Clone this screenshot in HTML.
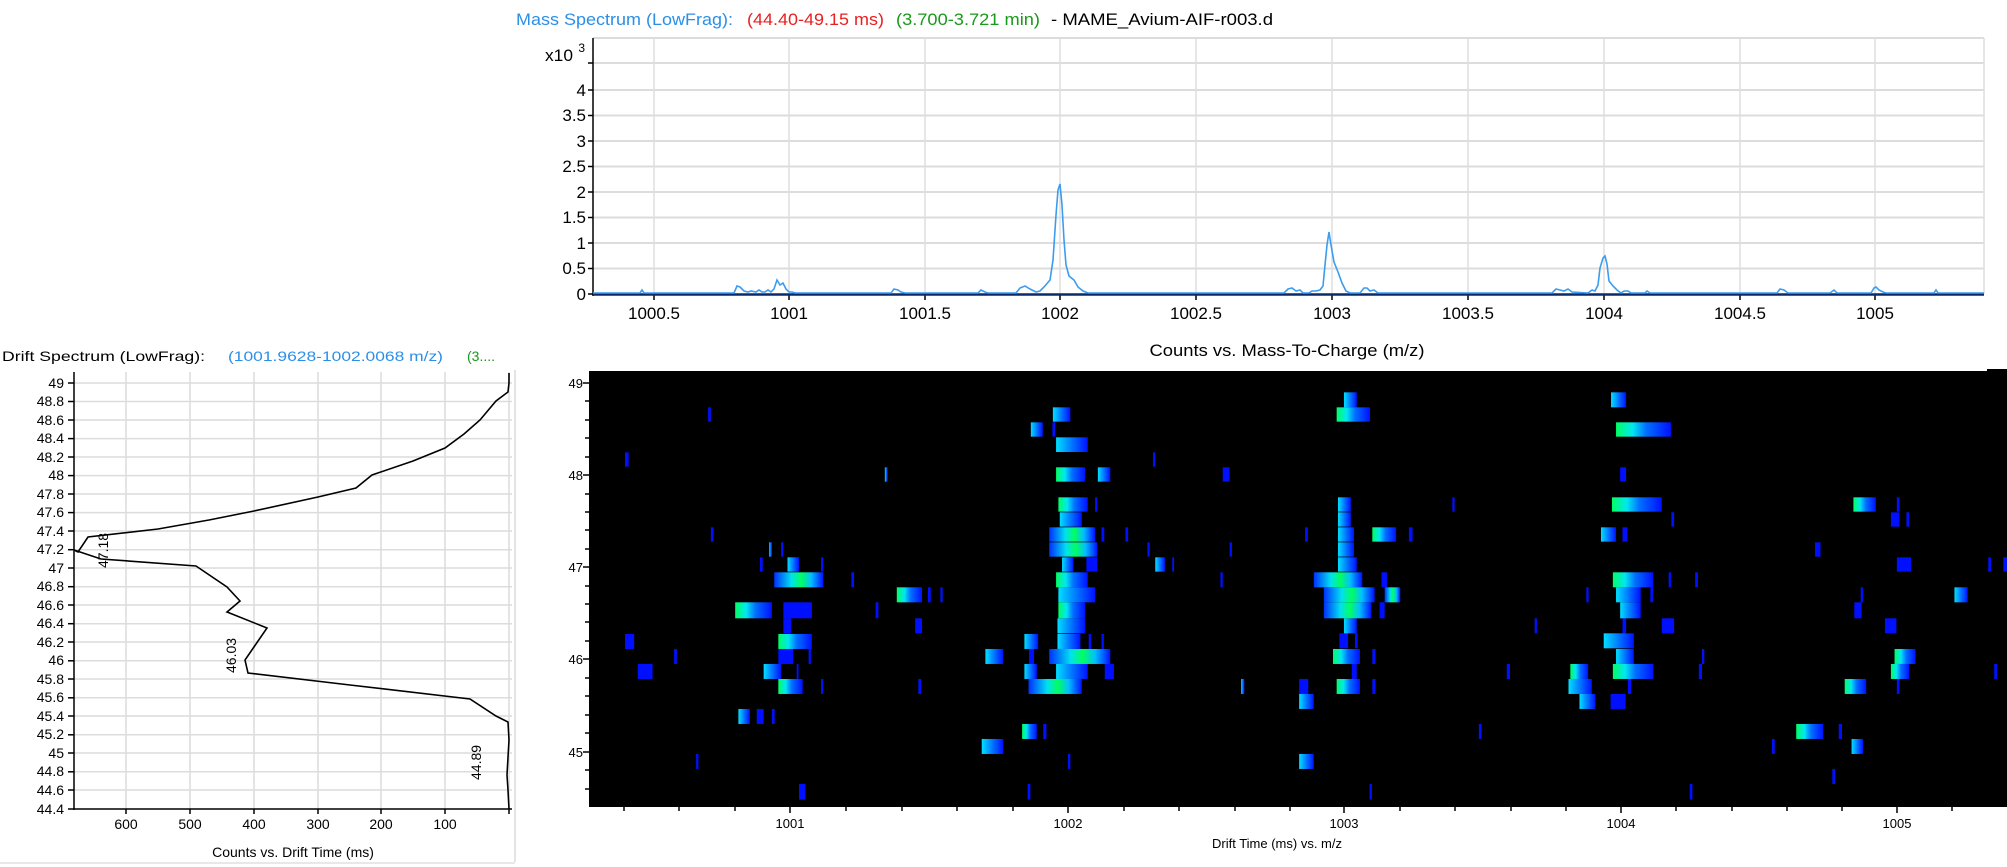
<!DOCTYPE html>
<html><head><meta charset="utf-8"><style>
html,body{margin:0;padding:0;background:#fff;width:2007px;height:867px;overflow:hidden}
svg{display:block}
text{font-family:"Liberation Sans",sans-serif}
</style></head><body>
<svg width="2007" height="867" viewBox="0 0 2007 867" xmlns="http://www.w3.org/2000/svg">
<defs>
<linearGradient id="g1" x1="0" x2="1" y1="0" y2="0"><stop offset="0" stop-color="#00ff60"/><stop offset="0.3" stop-color="#00e8f0"/><stop offset="0.55" stop-color="#0070ff"/><stop offset="1" stop-color="#0010ff"/></linearGradient>
<linearGradient id="g2" x1="0" x2="1" y1="0" y2="0"><stop offset="0" stop-color="#00e0ff"/><stop offset="0.45" stop-color="#0080ff"/><stop offset="1" stop-color="#0010ff"/></linearGradient>
<linearGradient id="g3" x1="0" x2="1" y1="0" y2="0"><stop offset="0" stop-color="#0030ff"/><stop offset="0.35" stop-color="#00e0f0"/><stop offset="0.55" stop-color="#00ff60"/><stop offset="0.75" stop-color="#00c0ff"/><stop offset="1" stop-color="#0010ff"/></linearGradient>
</defs>

<text x="516" y="25" font-size="17" fill="#2b8fe8" textLength="217" lengthAdjust="spacingAndGlyphs">Mass Spectrum (LowFrag):</text>
<text x="747" y="25" font-size="17" fill="#e82020" textLength="137" lengthAdjust="spacingAndGlyphs">(44.40-49.15 ms)</text>
<text x="896" y="25" font-size="17" fill="#1a9a1a" textLength="144" lengthAdjust="spacingAndGlyphs">(3.700-3.721 min)</text>
<text x="1051" y="25" font-size="17" fill="#000" textLength="222" lengthAdjust="spacingAndGlyphs">- MAME_Avium-AIF-r003.d</text>

<g stroke="#dcdcdc" stroke-width="2">
<line x1="593" y1="38" x2="1984" y2="38"/>
<line x1="593" y1="63" x2="1984" y2="63"/>
<line x1="593" y1="90" x2="1984" y2="90"/>
<line x1="593" y1="115.5" x2="1984" y2="115.5"/>
<line x1="593" y1="141" x2="1984" y2="141"/>
<line x1="593" y1="166.5" x2="1984" y2="166.5"/>
<line x1="593" y1="192" x2="1984" y2="192"/>
<line x1="593" y1="217.5" x2="1984" y2="217.5"/>
<line x1="593" y1="243" x2="1984" y2="243"/>
<line x1="593" y1="268.5" x2="1984" y2="268.5"/>
</g>
<g stroke="#dedede" stroke-width="1.5">
<line x1="654" y1="38" x2="654" y2="294"/><line x1="789" y1="38" x2="789" y2="294"/>
<line x1="925" y1="38" x2="925" y2="294"/><line x1="1060" y1="38" x2="1060" y2="294"/>
<line x1="1196" y1="38" x2="1196" y2="294"/><line x1="1332" y1="38" x2="1332" y2="294"/>
<line x1="1468" y1="38" x2="1468" y2="294"/><line x1="1604" y1="38" x2="1604" y2="294"/>
<line x1="1740" y1="38" x2="1740" y2="294"/><line x1="1875" y1="38" x2="1875" y2="294"/>
<line x1="1984" y1="38" x2="1984" y2="294"/>
</g>
<line x1="593" y1="38" x2="593" y2="296" stroke="#000" stroke-width="1.5"/>
<g stroke="#000" stroke-width="1.5">
<line x1="588" y1="63" x2="593" y2="63"/><line x1="588" y1="90" x2="593" y2="90"/><line x1="588" y1="115.5" x2="593" y2="115.5"/><line x1="588" y1="141" x2="593" y2="141"/><line x1="588" y1="166.5" x2="593" y2="166.5"/><line x1="588" y1="192" x2="593" y2="192"/><line x1="588" y1="217.5" x2="593" y2="217.5"/><line x1="588" y1="243" x2="593" y2="243"/><line x1="588" y1="268.5" x2="593" y2="268.5"/><line x1="588" y1="294" x2="593" y2="294"/>
<line x1="654" y1="294" x2="654" y2="300"/><line x1="789" y1="294" x2="789" y2="300"/><line x1="925" y1="294" x2="925" y2="300"/><line x1="1060" y1="294" x2="1060" y2="300"/><line x1="1196" y1="294" x2="1196" y2="300"/><line x1="1332" y1="294" x2="1332" y2="300"/><line x1="1468" y1="294" x2="1468" y2="300"/><line x1="1604" y1="294" x2="1604" y2="300"/><line x1="1740" y1="294" x2="1740" y2="300"/><line x1="1875" y1="294" x2="1875" y2="300"/>
</g>
<g font-size="17" fill="#000" text-anchor="end">
<text x="573" y="61" textLength="28" lengthAdjust="spacingAndGlyphs">x10</text>
<text x="585" y="52" font-size="12">3</text>
<text x="586" y="96">4</text><text x="586" y="121">3.5</text><text x="586" y="147">3</text><text x="586" y="172">2.5</text><text x="586" y="198">2</text><text x="586" y="223">1.5</text><text x="586" y="249">1</text><text x="586" y="274">0.5</text><text x="586" y="300">0</text>
</g>
<g font-size="17" fill="#000" text-anchor="middle">
<text x="654" y="319">1000.5</text><text x="789" y="319">1001</text><text x="925" y="319">1001.5</text><text x="1060" y="319">1002</text><text x="1196" y="319">1002.5</text><text x="1332" y="319">1003</text><text x="1468" y="319">1003.5</text><text x="1604" y="319">1004</text><text x="1740" y="319">1004.5</text><text x="1875" y="319">1005</text>
<text x="1287" y="356" textLength="275" lengthAdjust="spacingAndGlyphs">Counts vs. Mass-To-Charge (m/z)</text>
</g>
<line x1="593" y1="294.5" x2="1984" y2="294.5" stroke="#0a2a6a" stroke-width="2.5"/>
<polyline fill="none" stroke="#3b9cf0" stroke-width="1.6" points="593,293 640,293 642,290 644,293 734,293 737,286 740,287 744,291 748,292 751,291 756,292 759,290 762,292 765,292 768,290 771,292 774,289 777,280 780,285 783,283 786,289 789,292 792,292 795,293 891,293 894,289 898,290 901,292 905,293 978,293 981,290 985,292 988,293 1016,293 1020,288 1025,286 1030,289 1036,292 1040,291 1044,287 1050,280 1053,260 1056,215 1058,190 1060,184 1062,205 1064,240 1066,265 1069,276 1074,280 1078,287 1083,291 1088,293 1284,293 1288,289 1292,288 1296,291 1300,290 1303,293 1309,293 1312,291 1316,291 1320,290 1323,286 1325,265 1327,245 1329,232 1331,245 1334,262 1338,272 1342,283 1346,291 1350,293 1360,293 1364,288 1367,288 1370,291 1374,290 1378,293 1552,293 1556,289 1560,290 1564,291 1568,289 1572,292 1588,293 1592,290 1595,291 1598,285 1600,268 1603,258 1605,256 1607,264 1609,281 1613,286 1617,290 1621,293 1624,291 1628,291 1631,293 1645,293 1647,291 1650,293 1777,293 1780,289 1784,290 1788,293 1830,293 1834,290 1837,293 1871,293 1874,288 1876,287 1879,290 1883,292 1886,293 1934,293 1936,290 1938,293 1984,293"/>

<text x="2" y="361" font-size="14" fill="#000" textLength="203" lengthAdjust="spacingAndGlyphs">Drift Spectrum (LowFrag):</text>
<text x="228" y="361" font-size="14" fill="#2b8fe8" textLength="215" lengthAdjust="spacingAndGlyphs">(1001.9628-1002.0068  m/z)</text>
<text x="467" y="361" font-size="14" fill="#1a9a1a">(3....</text>
<line x1="515" y1="370" x2="515" y2="862" stroke="#e4e4e4" stroke-width="2"/>
<line x1="0" y1="863" x2="515" y2="863" stroke="#e8e8e8" stroke-width="2"/>
<g stroke="#dcdcdc" stroke-width="1.5">
<line x1="74" y1="383" x2="512" y2="383"/><line x1="74" y1="401.5" x2="512" y2="401.5"/><line x1="74" y1="420" x2="512" y2="420"/><line x1="74" y1="438.6" x2="512" y2="438.6"/><line x1="74" y1="457" x2="512" y2="457"/><line x1="74" y1="475.6" x2="512" y2="475.6"/><line x1="74" y1="494" x2="512" y2="494"/><line x1="74" y1="512.6" x2="512" y2="512.6"/><line x1="74" y1="531" x2="512" y2="531"/><line x1="74" y1="549.7" x2="512" y2="549.7"/><line x1="74" y1="568" x2="512" y2="568"/><line x1="74" y1="586.7" x2="512" y2="586.7"/><line x1="74" y1="605" x2="512" y2="605"/><line x1="74" y1="623.7" x2="512" y2="623.7"/><line x1="74" y1="642" x2="512" y2="642"/><line x1="74" y1="660.8" x2="512" y2="660.8"/><line x1="74" y1="679" x2="512" y2="679"/><line x1="74" y1="697.8" x2="512" y2="697.8"/><line x1="74" y1="716" x2="512" y2="716"/><line x1="74" y1="734.8" x2="512" y2="734.8"/><line x1="74" y1="753" x2="512" y2="753"/><line x1="74" y1="771.8" x2="512" y2="771.8"/><line x1="74" y1="790" x2="512" y2="790"/>
<line x1="126" y1="372" x2="126" y2="809"/><line x1="190" y1="372" x2="190" y2="809"/><line x1="254" y1="372" x2="254" y2="809"/><line x1="318" y1="372" x2="318" y2="809"/><line x1="381" y1="372" x2="381" y2="809"/><line x1="445" y1="372" x2="445" y2="809"/><line x1="509" y1="372" x2="509" y2="809"/>
</g>
<line x1="74" y1="372" x2="74" y2="810" stroke="#000" stroke-width="1.5"/>
<line x1="74" y1="809" x2="512" y2="809" stroke="#000" stroke-width="1.5"/>
<g stroke="#000" stroke-width="1.5">
<line x1="68" y1="383" x2="74" y2="383"/><line x1="68" y1="401.5" x2="74" y2="401.5"/><line x1="68" y1="420" x2="74" y2="420"/><line x1="68" y1="438.6" x2="74" y2="438.6"/><line x1="68" y1="457" x2="74" y2="457"/><line x1="68" y1="475.6" x2="74" y2="475.6"/><line x1="68" y1="494" x2="74" y2="494"/><line x1="68" y1="512.6" x2="74" y2="512.6"/><line x1="68" y1="531" x2="74" y2="531"/><line x1="68" y1="549.7" x2="74" y2="549.7"/><line x1="68" y1="568" x2="74" y2="568"/><line x1="68" y1="586.7" x2="74" y2="586.7"/><line x1="68" y1="605" x2="74" y2="605"/><line x1="68" y1="623.7" x2="74" y2="623.7"/><line x1="68" y1="642" x2="74" y2="642"/><line x1="68" y1="660.8" x2="74" y2="660.8"/><line x1="68" y1="679" x2="74" y2="679"/><line x1="68" y1="697.8" x2="74" y2="697.8"/><line x1="68" y1="716" x2="74" y2="716"/><line x1="68" y1="734.8" x2="74" y2="734.8"/><line x1="68" y1="753" x2="74" y2="753"/><line x1="68" y1="771.8" x2="74" y2="771.8"/><line x1="68" y1="790" x2="74" y2="790"/><line x1="68" y1="809" x2="74" y2="809"/>
<line x1="126" y1="809" x2="126" y2="814"/><line x1="190" y1="809" x2="190" y2="814"/><line x1="254" y1="809" x2="254" y2="814"/><line x1="318" y1="809" x2="318" y2="814"/><line x1="381" y1="809" x2="381" y2="814"/><line x1="445" y1="809" x2="445" y2="814"/><line x1="509" y1="809" x2="509" y2="814"/>
</g>
<g font-size="14" fill="#000" text-anchor="end">
<text x="64" y="388">49</text><text x="64" y="406">48.8</text><text x="64" y="425">48.6</text><text x="64" y="443">48.4</text><text x="64" y="462">48.2</text><text x="64" y="480">48</text><text x="64" y="499">47.8</text><text x="64" y="517">47.6</text><text x="64" y="536">47.4</text><text x="64" y="554">47.2</text><text x="64" y="573">47</text><text x="64" y="591">46.8</text><text x="64" y="610">46.6</text><text x="64" y="628">46.4</text><text x="64" y="647">46.2</text><text x="64" y="665">46</text><text x="64" y="684">45.8</text><text x="64" y="702">45.6</text><text x="64" y="721">45.4</text><text x="64" y="739">45.2</text><text x="64" y="758">45</text><text x="64" y="776">44.8</text><text x="64" y="795">44.6</text><text x="64" y="814">44.4</text>
</g>
<g font-size="14" fill="#000" text-anchor="middle">
<text x="126" y="829">600</text><text x="190" y="829">500</text><text x="254" y="829">400</text><text x="318" y="829">300</text><text x="381" y="829">200</text><text x="445" y="829">100</text>
<text x="293" y="857">Counts vs. Drift Time (ms)</text>
</g>
<polyline fill="none" stroke="#000" stroke-width="1.6" points="509,373 509,383 508,392 496,401 480,420 464,434 445,448 413,461 372,475 356,488 318,497 254,511 209,520 158,529 88,537 78,552 74,550 101,559 196,566 227,587 240,601 227,612 267,628 245,660 248,673 350,685 470,699 496,716 508,722 509,740 507,775 508,790 509,809"/>
<g font-size="14" fill="#000">
<text transform="translate(108,568) rotate(-90)">47.18</text>
<text transform="translate(236,673) rotate(-90)">46.03</text>
<text transform="translate(481,780) rotate(-90)">44.89</text>
</g>

<rect x="589" y="371" width="1418" height="436" fill="#000"/>
<rect x="1987" y="369" width="20" height="4" fill="#000"/>
<g stroke="#000" stroke-width="1.5">
<line x1="583" y1="383" x2="589" y2="383"/><line x1="585" y1="401" x2="589" y2="401"/><line x1="585" y1="420" x2="589" y2="420"/><line x1="585" y1="438" x2="589" y2="438"/><line x1="585" y1="457" x2="589" y2="457"/><line x1="583" y1="475" x2="589" y2="475"/><line x1="585" y1="494" x2="589" y2="494"/><line x1="585" y1="512" x2="589" y2="512"/><line x1="585" y1="530" x2="589" y2="530"/><line x1="585" y1="549" x2="589" y2="549"/><line x1="583" y1="567" x2="589" y2="567"/><line x1="585" y1="586" x2="589" y2="586"/><line x1="585" y1="604" x2="589" y2="604"/><line x1="585" y1="622" x2="589" y2="622"/><line x1="585" y1="641" x2="589" y2="641"/><line x1="583" y1="659" x2="589" y2="659"/><line x1="585" y1="678" x2="589" y2="678"/><line x1="585" y1="696" x2="589" y2="696"/><line x1="585" y1="715" x2="589" y2="715"/><line x1="585" y1="733" x2="589" y2="733"/><line x1="583" y1="752" x2="589" y2="752"/><line x1="585" y1="770" x2="589" y2="770"/><line x1="585" y1="789" x2="589" y2="789"/>
<line x1="624" y1="807" x2="624" y2="811"/><line x1="679" y1="807" x2="679" y2="811"/><line x1="735" y1="807" x2="735" y2="811"/><line x1="790" y1="807" x2="790" y2="813"/><line x1="846" y1="807" x2="846" y2="811"/><line x1="902" y1="807" x2="902" y2="811"/><line x1="957" y1="807" x2="957" y2="811"/><line x1="1013" y1="807" x2="1013" y2="811"/><line x1="1068" y1="807" x2="1068" y2="813"/><line x1="1124" y1="807" x2="1124" y2="811"/><line x1="1179" y1="807" x2="1179" y2="811"/><line x1="1235" y1="807" x2="1235" y2="811"/><line x1="1290" y1="807" x2="1290" y2="811"/><line x1="1344" y1="807" x2="1344" y2="813"/><line x1="1400" y1="807" x2="1400" y2="811"/><line x1="1455" y1="807" x2="1455" y2="811"/><line x1="1511" y1="807" x2="1511" y2="811"/><line x1="1566" y1="807" x2="1566" y2="811"/><line x1="1621" y1="807" x2="1621" y2="813"/><line x1="1676" y1="807" x2="1676" y2="811"/><line x1="1732" y1="807" x2="1732" y2="811"/><line x1="1787" y1="807" x2="1787" y2="811"/><line x1="1842" y1="807" x2="1842" y2="811"/><line x1="1897" y1="807" x2="1897" y2="813"/><line x1="1952" y1="807" x2="1952" y2="811"/>
</g>
<g font-size="13" fill="#000" text-anchor="end">
<text x="583" y="388">49</text><text x="583" y="480">48</text><text x="583" y="572">47</text><text x="583" y="664">46</text><text x="583" y="757">45</text>
</g>
<g font-size="13" fill="#000" text-anchor="middle">
<text x="790" y="828">1001</text><text x="1068" y="828">1002</text><text x="1344" y="828">1003</text><text x="1621" y="828">1004</text><text x="1897" y="828">1005</text>
<text x="1277" y="848">Drift Time (ms) vs. m/z</text>
</g>

<g transform="translate(580,365) scale(0.4591,0.3333)">
<g fill="#0010ff">
<rect x="279" y="127" width="6" height="43"/><rect x="1029" y="172" width="6" height="43"/>
<rect x="98" y="262" width="8" height="43"/><rect x="1248" y="262" width="5" height="43"/>
<rect x="1400" y="307" width="15" height="43"/><rect x="1122" y="397" width="5" height="43"/>
<rect x="285" y="487" width="6" height="43"/><rect x="1136" y="487" width="6" height="43"/><rect x="1188" y="487" width="6" height="43"/>
<rect x="438" y="532" width="5" height="43"/><rect x="1236" y="532" width="5" height="43"/><rect x="1415" y="532" width="5" height="43"/>
<rect x="392" y="577" width="6" height="43"/><rect x="525" y="577" width="5" height="43"/><rect x="1103" y="577" width="24" height="43"/><rect x="1290" y="577" width="4" height="43"/>
<rect x="591" y="622" width="6" height="45"/><rect x="1395" y="622" width="5" height="45"/>
<rect x="758" y="667" width="6" height="45"/><rect x="785" y="667" width="5" height="45"/>
<rect x="443" y="712" width="62" height="48"/><rect x="644" y="712" width="6" height="48"/>
<rect x="730" y="760" width="15" height="45"/><rect x="443" y="760" width="17" height="45"/>
<rect x="98" y="807" width="20" height="45"/><rect x="1108" y="807" width="5" height="45"/><rect x="1136" y="807" width="5" height="45"/>
<rect x="205" y="852" width="6" height="45"/><rect x="432" y="852" width="32" height="45"/><rect x="498" y="852" width="5" height="45"/><rect x="978" y="852" width="11" height="45"/>
<rect x="126" y="897" width="32" height="45"/><rect x="472" y="897" width="4" height="45"/><rect x="1143" y="897" width="20" height="45"/>
<rect x="525" y="942" width="5" height="45"/><rect x="737" y="942" width="6" height="45"/>
<rect x="385" y="1032" width="15" height="45"/><rect x="418" y="1032" width="6" height="45"/>
<rect x="1009" y="1077" width="7" height="45"/>
<rect x="253" y="1167" width="5" height="45"/><rect x="1063" y="1167" width="5" height="45"/>
<rect x="477" y="1257" width="14" height="47"/><rect x="975" y="1257" width="6" height="47"/>
</g>
<g fill="url(#g2)">
<rect x="1030" y="127" width="38" height="43"/><rect x="982" y="172" width="26" height="43"/>
<rect x="1037" y="217" width="69" height="44"/><rect x="664" y="307" width="6" height="43"/>
<rect x="1128" y="307" width="27" height="43"/><rect x="1045" y="442" width="48" height="43"/>
<rect x="412" y="532" width="6" height="43"/><rect x="452" y="577" width="25" height="43"/>
<rect x="1050" y="577" width="25" height="43"/><rect x="1253" y="577" width="21" height="43"/>
<rect x="1042" y="667" width="80" height="45"/><rect x="1040" y="760" width="60" height="45"/>
<rect x="968" y="807" width="30" height="45"/><rect x="1040" y="807" width="50" height="45"/>
<rect x="883" y="852" width="39" height="45"/><rect x="400" y="897" width="38" height="45"/>
<rect x="968" y="897" width="27" height="45"/><rect x="1037" y="897" width="69" height="45"/>
<rect x="1440" y="942" width="7" height="45"/><rect x="345" y="1032" width="25" height="45"/>
<rect x="875" y="1122" width="47" height="45"/>
</g>
<g fill="url(#g1)">
<rect x="1037" y="307" width="63" height="43"/><rect x="1042" y="397" width="64" height="43"/>
<rect x="1037" y="622" width="69" height="45"/><rect x="690" y="667" width="55" height="45"/>
<rect x="338" y="712" width="80" height="48"/><rect x="1042" y="712" width="58" height="48"/>
<rect x="432" y="807" width="73" height="45"/><rect x="432" y="942" width="53" height="45"/>
<rect x="963" y="1077" width="32" height="45"/>
</g>
<g fill="url(#g3)">
<rect x="1022" y="487" width="100" height="43"/><rect x="1022" y="532" width="105" height="43"/>
<rect x="423" y="622" width="107" height="45"/><rect x="1022" y="852" width="133" height="45"/>
<rect x="977" y="942" width="116" height="45"/>
</g>
</g>

<g transform="translate(1290,365) scale(0.4573,0.3333)">
<g fill="#0010ff">
<rect x="722" y="307" width="13" height="43"/><rect x="355" y="397" width="5" height="43"/><rect x="1327" y="397" width="6" height="43"/>
<rect x="834" y="442" width="6" height="43"/><rect x="1314" y="442" width="19" height="43"/><rect x="1348" y="442" width="6" height="43"/>
<rect x="33" y="487" width="6" height="43"/><rect x="260" y="487" width="8" height="43"/><rect x="727" y="487" width="11" height="43"/>
<rect x="1148" y="532" width="12" height="43"/>
<rect x="1327" y="577" width="31" height="43"/><rect x="1527" y="577" width="6" height="43"/><rect x="1560" y="577" width="8" height="43"/>
<rect x="200" y="622" width="12" height="45"/><rect x="828" y="622" width="5" height="45"/><rect x="886" y="622" width="6" height="45"/>
<rect x="648" y="667" width="5" height="45"/><rect x="788" y="667" width="6" height="45"/><rect x="1248" y="667" width="5" height="45"/>
<rect x="196" y="712" width="11" height="48"/><rect x="1234" y="712" width="16" height="48"/>
<rect x="535" y="760" width="5" height="45"/><rect x="727" y="760" width="8" height="45"/><rect x="813" y="760" width="27" height="45"/><rect x="1301" y="760" width="25" height="45"/>
<rect x="108" y="805" width="19" height="45"/><rect x="142" y="805" width="6" height="45"/>
<rect x="180" y="852" width="7" height="45"/><rect x="901" y="852" width="5" height="45"/>
<rect x="135" y="897" width="11" height="45"/><rect x="474" y="897" width="7" height="45"/><rect x="894" y="897" width="7" height="45"/><rect x="1540" y="897" width="6" height="45"/>
<rect x="20" y="942" width="20" height="45"/><rect x="180" y="942" width="7" height="45"/><rect x="739" y="942" width="7" height="45"/><rect x="1327" y="942" width="6" height="45"/>
<rect x="701" y="987" width="33" height="45"/>
<rect x="413" y="1077" width="6" height="45"/><rect x="1200" y="1077" width="7" height="45"/>
<rect x="1054" y="1122" width="6" height="45"/>
<rect x="1186" y="1212" width="6" height="45"/>
<rect x="174" y="1257" width="5" height="47"/><rect x="874" y="1257" width="6" height="47"/>
</g>
<g fill="url(#g2)">
<rect x="118" y="82" width="28" height="45"/><rect x="702" y="82" width="33" height="45"/>
<rect x="105" y="397" width="28" height="43"/><rect x="105" y="442" width="28" height="43"/>
<rect x="105" y="487" width="35" height="43"/><rect x="680" y="487" width="33" height="43"/>
<rect x="105" y="532" width="35" height="43"/><rect x="105" y="577" width="41" height="43"/>
<rect x="713" y="667" width="54" height="45"/><rect x="1453" y="667" width="29" height="45"/>
<rect x="722" y="712" width="45" height="48"/><rect x="118" y="760" width="28" height="45"/>
<rect x="686" y="805" width="66" height="45"/><rect x="713" y="852" width="39" height="45"/>
<rect x="609" y="942" width="51" height="45"/><rect x="20" y="987" width="32" height="45"/>
<rect x="633" y="987" width="35" height="45"/><rect x="1228" y="1122" width="25" height="45"/>
<rect x="20" y="1167" width="32" height="45"/>
</g>
<g fill="url(#g1)">
<rect x="102" y="127" width="73" height="43"/><rect x="713" y="172" width="120" height="43"/>
<rect x="704" y="397" width="109" height="43"/><rect x="1232" y="397" width="49" height="43"/>
<rect x="180" y="487" width="52" height="43"/><rect x="706" y="622" width="88" height="45"/>
<rect x="94" y="852" width="59" height="45"/><rect x="1322" y="852" width="46" height="45"/>
<rect x="613" y="897" width="39" height="45"/><rect x="706" y="897" width="89" height="45"/>
<rect x="1314" y="897" width="40" height="45"/><rect x="102" y="942" width="51" height="45"/>
<rect x="1213" y="942" width="47" height="45"/><rect x="1107" y="1077" width="59" height="45"/>
</g>
<g fill="url(#g3)">
<rect x="52" y="622" width="106" height="45"/><rect x="74" y="667" width="111" height="45"/>
<rect x="207" y="667" width="34" height="45"/><rect x="74" y="712" width="104" height="48"/>
</g>
</g>
</svg>
</body></html>
